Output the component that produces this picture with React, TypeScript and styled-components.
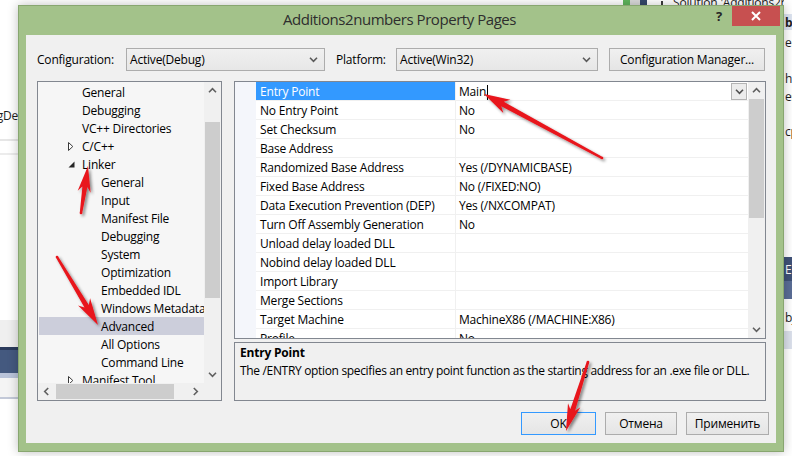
import React from "react";
import styled, { createGlobalStyle } from "styled-components";

const FONT = `"Open Sans", "Noto Sans", "Liberation Sans", sans-serif`;

const GlobalStyle = createGlobalStyle`
  html, body { margin: 0; padding: 0; background: #ffffff; }
  body { width: 792px; height: 456px; overflow: hidden; }
  * { box-sizing: border-box; }
`;

const Desktop = styled.div`
  position: relative;
  width: 792px;
  height: 456px;
  overflow: hidden;
  background: #ffffff;
  font-family: ${FONT};
  font-size: 12px;
  letter-spacing: -0.2px;
  color: #000;
`;

/* ---------- windows behind the dialog ---------- */
const BackWindow = styled.div<{ $left: number; $width: number }>`
  position: absolute;
  top: 0;
  left: ${(p) => p.$left}px;
  width: ${(p) => p.$width}px;
  height: 456px;
  display: flex;
  flex-direction: column;
  overflow: hidden;
  background: #ffffff;
`;

const Band = styled.div<{ $h: number; $bg?: string; $color?: string; $justify?: string; $bold?: boolean }>`
  flex: 0 0 ${(p) => p.$h}px;
  display: flex;
  align-items: center;
  justify-content: ${(p) => p.$justify ?? "flex-start"};
  padding-left: 1px;
  background: ${(p) => p.$bg ?? "transparent"};
  color: ${(p) => p.$color ?? "#1e1e1e"};
  font-weight: ${(p) => (p.$bold ? 700 : 400)};
  white-space: nowrap;
  overflow: hidden;
`;

const EditorStripes = styled.div`
  position: absolute;
  left: 623px;
  top: 0;
  width: 24px;
  height: 6px;
  background: linear-gradient(
    to right,
    #5fb55c 0 7px,
    #d9d9d9 7px 17px,
    #34486a 17px 24px
  );
`;

const SolutionTitle = styled.div`
  position: absolute;
  left: 661px;
  top: 0;
  width: 123px;
  height: 5px;
  overflow: hidden;
`;

const SolutionTitleInner = styled.div`
  margin-top: -7px;
  height: 18px;
  display: flex;
  align-items: center;
  gap: 10px;
  white-space: nowrap;
  color: #1e1e1e;
`;

const SolutionIcon = styled.span`
  width: 9px;
  height: 9px;
  border: 1px solid #3c3c3c;
  margin-top: 6px;
`;

/* ---------- the dialog ---------- */
const Dialog = styled.div`
  position: absolute;
  left: 18px;
  top: 5px;
  width: 766px;
  height: 447px;
  display: flex;
  flex-direction: column;
  background: #a3c28a;
  border: 1px solid #88a670;
  box-shadow: 0 0 10px rgba(0, 0, 0, 0.25);
`;

const TitleBar = styled.div`
  flex: 0 0 29px;
  display: grid;
  grid-template-columns: 1fr auto 1fr;
  padding-right: 3px;
`;

const TitleText = styled.div`
  grid-column: 2;
  align-self: center;
  padding-bottom: 3px;
  font-size: 15px;
  letter-spacing: -0.45px;
  color: #2e2e2e;
`;

const CaptionButtons = styled.div`
  grid-column: 3;
  display: flex;
  justify-content: flex-end;
  align-items: flex-start;
`;

const HelpButton = styled.div`
  width: 26px;
  height: 20px;
  display: flex;
  align-items: center;
  justify-content: center;
  font-weight: 700;
  font-size: 13px;
  color: #262626;
`;

const CloseButton = styled.div`
  width: 48px;
  height: 20px;
  background: #c75050;
  display: flex;
  align-items: center;
  justify-content: center;
`;

const Client = styled.div`
  flex: 1;
  min-height: 0;
  margin: 0 7px 8px 7px;
  background: #f0f0f0;
  display: flex;
  flex-direction: column;
  padding: 13px 10px 9px 11px;
`;

const ConfigRow = styled.div`
  flex: 0 0 23px;
  display: grid;
  grid-template-columns: 89px 199px 71px 202px 11px 156px;
  align-items: center;
  margin-bottom: 10px;
`;

const FieldLabel = styled.div<{ $indent?: number }>`
  padding-left: ${(p) => p.$indent ?? 0}px;
  white-space: nowrap;
`;

const Combo = styled.div`
  height: 23px;
  border: 1px solid #acacac;
  background: linear-gradient(#f0f0f0, #e7e7e7);
  display: flex;
  align-items: center;
  justify-content: space-between;
  padding: 0 6px 0 3px;
`;

const PushButton = styled.div<{ $width?: number; $default?: boolean }>`
  width: ${(p) => (p.$width ? `${p.$width}px` : "auto")};
  height: 23px;
  border: 1px solid ${(p) => (p.$default ? "#3399ff" : "#acacac")};
  background: linear-gradient(#f0f0f0, #e5e5e5);
  display: flex;
  align-items: center;
  justify-content: center;
  white-space: nowrap;
`;

const MainArea = styled.div`
  flex: 0 0 320px;
  min-height: 0;
  display: flex;
  gap: 12px;
  margin-bottom: 11px;
`;

/* tree */
const TreePanel = styled.div`
  flex: 0 0 185px;
  min-height: 0;
  border: 1px solid #828790;
  background: #f6f6f6;
  display: grid;
  grid-template-columns: minmax(0, 1fr) 17px;
  grid-template-rows: minmax(0, 1fr) 17px;
`;

const TreeContent = styled.div`
  overflow: hidden;
  padding-top: 1px;
  display: flex;
  flex-direction: column;
`;

const TreeRow = styled.div<{ $level: number; $selected?: boolean }>`
  flex: 0 0 18px;
  display: flex;
  align-items: center;
  margin-left: 1px;
  padding-left: ${(p) => (p.$level === 1 ? 27 : 62)}px;
  background: ${(p) => (p.$selected ? "#cccedb" : "transparent")};
  white-space: nowrap;
`;

const Expander = styled.span`
  flex: 0 0 16px;
  display: flex;
  align-items: center;
  padding-left: 2px;
`;

const ScrollV = styled.div`
  display: flex;
  flex-direction: column;
  background: #f0f0f0;
  min-height: 0;
`;

const ScrollH = styled.div`
  display: flex;
  background: #f0f0f0;
`;

const ArrowBox = styled.div`
  flex: 0 0 17px;
  height: 17px;
  display: flex;
  align-items: center;
  justify-content: center;
`;

const TrackV = styled.div`
  flex: 1;
  min-height: 0;
  display: flex;
  flex-direction: column;
  align-items: center;
`;

const TrackH = styled.div`
  flex: 1;
  display: flex;
  align-items: center;
`;

const ThumbV = styled.div<{ $offset: number; $size: number }>`
  margin-top: ${(p) => p.$offset}px;
  width: 15px;
  height: ${(p) => p.$size}px;
  background: #cdcdcd;
`;

const ThumbH = styled.div<{ $offset: number; $size: number }>`
  margin-left: ${(p) => p.$offset}px;
  height: 15px;
  width: ${(p) => p.$size}px;
  background: #cdcdcd;
`;

const Corner = styled.div`
  background: #f0f0f0;
`;

/* property grid */
const RightColumn = styled.div`
  flex: 0 0 532px;
  min-height: 0;
  display: flex;
  flex-direction: column;
  gap: 3px;
`;

const PropGrid = styled.div`
  flex: 0 0 258px;
  min-height: 0;
  overflow: hidden;
  border: 1px solid #828790;
  background: #ffffff;
  display: grid;
  grid-template-columns: minmax(0, 1fr) 17px;
  grid-template-rows: minmax(0, 1fr);
`;

const PropRows = styled.div`
  overflow: hidden;
  min-height: 0;
  display: flex;
  flex-direction: column;
`;

const PropRow = styled.div`
  flex: 0 0 19px;
  display: grid;
  grid-template-columns: 21px 200px 1fr;
`;

const Gutter = styled.div`
  background: #f4f6fb;
`;

const NameCell = styled.div<{ $selected?: boolean }>`
  border-bottom: 1px solid #f0f0f0;
  border-right: 1px solid #f0f0f0;
  padding: 2px 0 0 4px;
  line-height: 16px;
  white-space: nowrap;
  overflow: hidden;
  background: ${(p) => (p.$selected ? "#3399ff" : "transparent")};
  color: ${(p) => (p.$selected ? "#ffffff" : "#000000")};
`;

const ValueCell = styled.div`
  border-bottom: 1px solid #f0f0f0;
  padding: 2px 0 0 3px;
  line-height: 16px;
  white-space: nowrap;
  overflow: hidden;
  display: flex;
  align-items: center;
`;

const Caret = styled.span`
  width: 1px;
  height: 15px;
  background: #000;
  margin-left: 1px;
`;

const DropButton = styled.div`
  margin-left: auto;
  margin-right: 1px;
  margin-top: -1px;
  width: 16px;
  height: 17px;
  border: 1px solid #b4b4b4;
  background: #ececec;
  display: flex;
  align-items: center;
  justify-content: center;
`;

const DescPanel = styled.div`
  flex: 1;
  min-height: 0;
  overflow: hidden;
  border: 1px solid #828790;
  background: #f0f0f0;
  padding: 1px 5px;
  line-height: 18px;
`;

const DescTitle = styled.div`
  font-weight: 700;
`;

const DescText = styled.div`
  letter-spacing: -0.33px;
  white-space: nowrap;
`;

const ButtonRow = styled.div`
  flex: 0 0 22px;
  display: flex;
  justify-content: flex-end;
  gap: 9px;
  margin-right: -3px;
`;

const ArrowLayer = styled.svg`
  position: absolute;
  left: 0;
  top: 0;
  width: 792px;
  height: 456px;
  pointer-events: none;
`;

/* ---------- small drawings ---------- */
type Dir = "up" | "down" | "left" | "right";
const Chevron = ({ dir, color = "#606060" }: { dir: Dir; color?: string }) => {
  const paths: Record<Dir, string> = {
    up: "M1 5.2 L4.5 1.7 L8 5.2",
    down: "M1 1.8 L4.5 5.3 L8 1.8",
    left: "M5.2 1 L1.7 4.5 L5.2 8",
    right: "M1.8 1 L5.3 4.5 L1.8 8",
  };
  const horiz = dir === "up" || dir === "down";
  return (
    <svg width={horiz ? 9 : 7} height={horiz ? 7 : 9} viewBox={horiz ? "0 0 9 7" : "0 0 7 9"}>
      <path d={paths[dir]} fill="none" stroke={color} strokeWidth={1.6} />
    </svg>
  );
};

const Collapsed = () => (
  <svg width="6" height="9" viewBox="0 0 6 9">
    <polygon points="0.5,0.5 4.8,4.5 0.5,8.5" fill="#ffffff" stroke="#3a3a3a" strokeWidth="1" />
  </svg>
);

const Expanded = () => (
  <svg width="7" height="7" viewBox="0 0 7 7">
    <polygon points="6.5,0.5 6.5,6.5 0.5,6.5" fill="#262626" />
  </svg>
);

const CloseGlyph = () => (
  <svg width="10" height="10" viewBox="0 0 10 10">
    <path d="M1 1 L9 9 M9 1 L1 9" stroke="#ffffff" strokeWidth="2" />
  </svg>
);

type Pt = [number, number];
function arrowPolygon(tail: Pt, tip: Pt, headLen: number, headW: number, neckW: number, tailW: number) {
  const [x1, y1] = tail;
  const [x2, y2] = tip;
  const dx = x2 - x1;
  const dy = y2 - y1;
  const L = Math.hypot(dx, dy);
  const ux = dx / L;
  const uy = dy / L;
  const px = -uy;
  const py = ux;
  const bx = x2 - ux * headLen;
  const by = y2 - uy * headLen;
  const nx = x2 - ux * (headLen - 5);
  const ny = y2 - uy * (headLen - 5);
  const pts: Pt[] = [
    [x1 + (px * tailW) / 2, y1 + (py * tailW) / 2],
    [nx + (px * neckW) / 2, ny + (py * neckW) / 2],
    [bx + (px * headW) / 2, by + (py * headW) / 2],
    [x2, y2],
    [bx - (px * headW) / 2, by - (py * headW) / 2],
    [nx - (px * neckW) / 2, ny - (py * neckW) / 2],
    [x1 - (px * tailW) / 2, y1 - (py * tailW) / 2],
  ];
  return pts.map((p) => `${p[0].toFixed(1)},${p[1].toFixed(1)}`).join(" ");
}

const arrows: { tail: Pt; tip: Pt; head: number; w: number }[] = [
  { tail: [602, 158], tip: [484, 94], head: 26, w: 15 },
  { tail: [81, 213], tip: [88, 166], head: 26, w: 13 },
  { tail: [57, 257], tip: [98, 325], head: 27, w: 14 },
  { tail: [588, 362], tip: [566, 431], head: 27, w: 13 },
];

/* ---------- data ---------- */
type TreeItem = { label: string; level: 1 | 2; exp?: "collapsed" | "expanded"; selected?: boolean };
const tree: TreeItem[] = [
  { label: "General", level: 1 },
  { label: "Debugging", level: 1 },
  { label: "VC++ Directories", level: 1 },
  { label: "C/C++", level: 1, exp: "collapsed" },
  { label: "Linker", level: 1, exp: "expanded" },
  { label: "General", level: 2 },
  { label: "Input", level: 2 },
  { label: "Manifest File", level: 2 },
  { label: "Debugging", level: 2 },
  { label: "System", level: 2 },
  { label: "Optimization", level: 2 },
  { label: "Embedded IDL", level: 2 },
  { label: "Windows Metadata", level: 2 },
  { label: "Advanced", level: 2, selected: true },
  { label: "All Options", level: 2 },
  { label: "Command Line", level: 2 },
  { label: "Manifest Tool", level: 1, exp: "collapsed" },
];

const props: [string, string][] = [
  ["Entry Point", "Main"],
  ["No Entry Point", "No"],
  ["Set Checksum", "No"],
  ["Base Address", ""],
  ["Randomized Base Address", "Yes (/DYNAMICBASE)"],
  ["Fixed Base Address", "No (/FIXED:NO)"],
  ["Data Execution Prevention (DEP)", "Yes (/NXCOMPAT)"],
  ["Turn Off Assembly Generation", "No"],
  ["Unload delay loaded DLL", ""],
  ["Nobind delay loaded DLL", ""],
  ["Import Library", ""],
  ["Merge Sections", ""],
  ["Target Machine", "MachineX86 (/MACHINE:X86)"],
  ["Profile", "No"],
];

export default function App() {
  return (
    <>
      <GlobalStyle />
      <Desktop>
        <BackWindow $left={0} $width={18}>
          <Band $h={106} />
          <Band $h={18} $justify="flex-end">ngDe</Band>
          <Band $h={15} />
          <Band $h={2} $bg="#e6e6e6" />
          <Band $h={12} />
          <Band $h={2} $bg="#ececec" />
          <Band $h={165} />
          <Band $h={27} $bg="#efefef" />
          <Band $h={3} $bg="#2b3b5c" />
          <Band $h={23} $bg="#44597f" />
          <Band $h={5} $bg="#b9c3d9" />
          <Band $h={19} $bg="#f4f4f4" />
          <Band $h={2} $bg="#c3c9d8" />
        </BackWindow>

        <BackWindow $left={784} $width={8}>
          <Band $h={14} />
          <Band $h={16} $bg="#dde4f0" $bold>be</Band>
          <Band $h={3} />
          <Band $h={18}>er</Band>
          <Band $h={18} />
          <Band $h={18}>h</Band>
          <Band $h={18}>es</Band>
          <Band $h={17} />
          <Band $h={18}>cp</Band>
          <Band $h={117} />
          <Band $h={24} $bg="#3f5278" $color="#ffffff">E</Band>
          <Band $h={18} $bg="#5a6d96" />
          <Band $h={9} />
          <Band $h={18}>bje</Band>
          <Band $h={5} />
          <Band $h={18} $bg="#dce1ec" />
        </BackWindow>

        <EditorStripes />
        <SolutionTitle>
          <SolutionTitleInner>
            <SolutionIcon />
            <span>Solution 'Additions2numbers'</span>
          </SolutionTitleInner>
        </SolutionTitle>

        <Dialog>
          <TitleBar>
            <TitleText>Additions2numbers Property Pages</TitleText>
            <CaptionButtons>
              <HelpButton>?</HelpButton>
              <CloseButton>
                <CloseGlyph />
              </CloseButton>
            </CaptionButtons>
          </TitleBar>

          <Client>
            <ConfigRow>
              <FieldLabel>Configuration:</FieldLabel>
              <Combo>
                <span>Active(Debug)</span>
                <Chevron dir="down" color="#5a5a5a" />
              </Combo>
              <FieldLabel $indent={11}>Platform:</FieldLabel>
              <Combo>
                <span>Active(Win32)</span>
                <Chevron dir="down" color="#5a5a5a" />
              </Combo>
              <span />
              <PushButton>Configuration Manager...</PushButton>
            </ConfigRow>

            <MainArea>
              <TreePanel>
                <TreeContent>
                  {tree.map((t, i) => (
                    <TreeRow key={i} $level={t.level} $selected={t.selected}>
                      {t.level === 1 && (
                        <Expander>
                          {t.exp === "collapsed" && <Collapsed />}
                          {t.exp === "expanded" && <Expanded />}
                        </Expander>
                      )}
                      {t.label}
                    </TreeRow>
                  ))}
                </TreeContent>
                <ScrollV>
                  <ArrowBox>
                    <Chevron dir="up" />
                  </ArrowBox>
                  <TrackV>
                    <ThumbV $offset={23} $size={176} />
                  </TrackV>
                  <ArrowBox>
                    <Chevron dir="down" />
                  </ArrowBox>
                </ScrollV>
                <ScrollH>
                  <ArrowBox>
                    <Chevron dir="left" />
                  </ArrowBox>
                  <TrackH>
                    <ThumbH $offset={1} $size={118} />
                  </TrackH>
                  <ArrowBox>
                    <Chevron dir="right" />
                  </ArrowBox>
                </ScrollH>
                <Corner />
              </TreePanel>

              <RightColumn>
                <PropGrid>
                  <PropRows>
                    {props.map(([name, value], i) => (
                      <PropRow key={i}>
                        <Gutter />
                        <NameCell $selected={i === 0}>{name}</NameCell>
                        <ValueCell>
                          {value}
                          {i === 0 && (
                            <>
                              <Caret />
                              <DropButton>
                                <Chevron dir="down" color="#505050" />
                              </DropButton>
                            </>
                          )}
                        </ValueCell>
                      </PropRow>
                    ))}
                  </PropRows>
                  <ScrollV>
                    <ArrowBox>
                      <Chevron dir="up" />
                    </ArrowBox>
                    <TrackV>
                      <ThumbV $offset={0} $size={119} />
                    </TrackV>
                    <ArrowBox>
                      <Chevron dir="down" />
                    </ArrowBox>
                  </ScrollV>
                </PropGrid>
                <DescPanel>
                  <DescTitle>Entry Point</DescTitle>
                  <DescText>
                    The /ENTRY option specifies an entry point function as the starting address for an .exe file or DLL.
                  </DescText>
                </DescPanel>
              </RightColumn>
            </MainArea>

            <ButtonRow>
              <PushButton $width={75} $default>
                OK
              </PushButton>
              <PushButton $width={72}>Отмена</PushButton>
              <PushButton $width={83}>Применить</PushButton>
            </ButtonRow>
          </Client>
        </Dialog>

        <ArrowLayer viewBox="0 0 792 456">
          <defs>
            <filter id="arrowShadow" x="-30%" y="-30%" width="160%" height="160%">
              <feDropShadow dx="2" dy="2" stdDeviation="1.5" floodColor="#000000" floodOpacity="0.45" />
            </filter>
          </defs>
          {arrows.map((a, i) => (
            <g key={i} filter="url(#arrowShadow)">
              <polygon points={arrowPolygon(a.tail, a.tip, a.head, a.w, 5, 2.5)} fill="#e8141c" />
              <circle cx={a.tail[0]} cy={a.tail[1]} r={1.3} fill="#e8141c" />
            </g>
          ))}
        </ArrowLayer>
      </Desktop>
    </>
  );
}
